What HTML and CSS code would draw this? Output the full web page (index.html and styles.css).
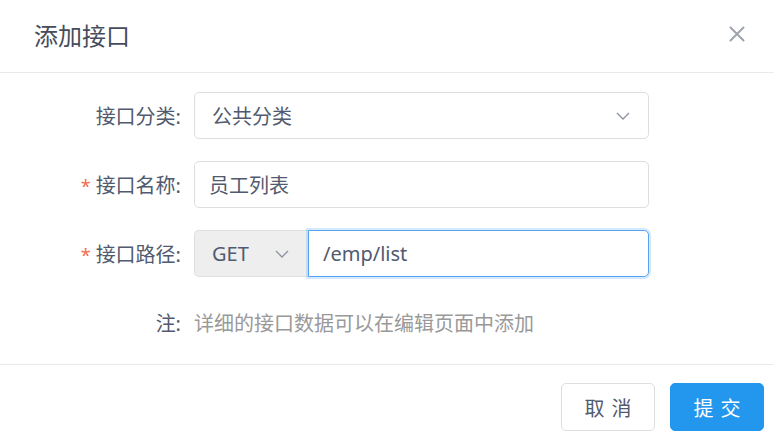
FILE: index.html
```html
<!DOCTYPE html>
<html>

<head>
    <meta charset="UTF-8">
    <title>添加接口</title>
    <link rel="stylesheet" href="styles.css">
</head>

<body>
    <div class="dialog">
        <div class="dialogHeader">
            <span class="dialogTitle">添加接口</span>
            <span class="dialogClose">
                <svg width="16" height="16" viewBox="0 0 16 16">
                    <path d="M1.5 1.5 L14.5 14.5 M14.5 1.5 L1.5 14.5" stroke="#9ea3ad" stroke-width="2" fill="none" stroke-linecap="round" />
                </svg>
            </span>
        </div>

        <div class="dialogBody">
            <div class="formItem">
                <label class="formLabel">接口分类:</label>
                <div class="formControl">
                    <div class="select">
                        <span>公共分类</span>
                        <svg class="arrow" width="14" height="8" viewBox="0 0 14 8">
                            <polyline points="1,1 7,7 13,1" fill="none" stroke="#8a91a0" stroke-width="1.3" />
                        </svg>
                    </div>
                </div>
            </div>

            <div class="formItem">
                <label class="formLabel"><i class="required">*</i>接口名称:</label>
                <div class="formControl">
                    <input class="input" type="text" value="员工列表" />
                </div>
            </div>

            <div class="formItem">
                <label class="formLabel"><i class="required">*</i>接口路径:</label>
                <div class="formControl inputGroup">
                    <div class="prepend">
                        <span>GET</span>
                        <svg class="arrow" width="14" height="8" viewBox="0 0 14 8">
                            <polyline points="1,1 7,7 13,1" fill="none" stroke="#8a91a0" stroke-width="1.3" />
                        </svg>
                    </div>
                    <input class="input focused" type="text" value="/emp/list" />
                </div>
            </div>

            <div class="formItem">
                <label class="formLabel">注:</label>
                <div class="formControl hint">详细的接口数据可以在编辑页面中添加</div>
            </div>
        </div>

        <div class="dialogFooter">
            <button class="btn">取消</button>
            <button class="btn btnPrimary">提交</button>
        </div>
    </div>
</body>

</html>
```

FILE: styles.css
```css
* {
    margin: 0;
    padding: 0;
    box-sizing: border-box;
}

/* Global styles */
body {
    font-family: "Noto Sans", "Noto Sans CJK SC", sans-serif;
    background-color: #fff;
    color: #515a6e;
}

.dialog {
    width: 774px;
}

/* Header */
.dialogHeader {
    height: 73px;
    border-bottom: 1px solid #e8eaec;
    display: flex;
    align-items: center;
    justify-content: space-between;
    padding: 0 29px 4px 34px;
}

.dialogTitle {
    font-size: 24px;
    color: #464c5b;
}

.dialogClose {
    display: flex;
    cursor: pointer;
}

/* Form */
.dialogBody {
    padding: 19px 0 18px;
}

.formItem {
    display: flex;
    align-items: center;
    height: 47px;
    margin-bottom: 22px;
    font-size: 20px;
}

.formItem:last-child {
    margin-bottom: 0;
}

.formLabel {
    width: 194px;
    padding-right: 13px;
    text-align: right;
    color: #515a6e;
}

.required {
    font-style: normal;
    color: #f56c4c;
    margin-right: 5px;
    font-size: 18px;
}

.formControl {
    width: 455px;
    height: 100%;
}

.select {
    height: 100%;
    border: 1px solid #dcdee2;
    border-radius: 5px;
    display: flex;
    align-items: center;
    justify-content: space-between;
    padding: 0 18px 0 17px;
}

.input {
    width: 100%;
    height: 100%;
    border: 1px solid #dcdee2;
    border-radius: 5px;
    padding: 0 14px;
    font-family: inherit;
    font-size: 20px;
    color: #515a6e;
    outline: none;
}

.inputGroup {
    display: flex;
}

.prepend {
    width: 114px;
    flex: none;
    background-color: #eeeeee;
    border: 1px solid #dcdee2;
    border-right: none;
    border-radius: 5px 0 0 5px;
    display: flex;
    align-items: center;
    justify-content: space-between;
    padding: 0 19px 0 17px;
}

.inputGroup .input {
    border-radius: 0 5px 5px 0;
}

.input.focused {
    border-color: #57a3f3;
    box-shadow: 0 0 0 2px rgba(45, 140, 240, 0.2);
}

.hint {
    display: flex;
    align-items: center;
    color: #999;
}

/* Footer */
.dialogFooter {
    border-top: 1px solid #e8eaec;
    display: flex;
    justify-content: flex-end;
    gap: 15px;
    padding: 18px 10px 0 0;
}

.btn {
    width: 94px;
    height: 48px;
    border: 1px solid #dcdee2;
    border-radius: 5px;
    background-color: #fff;
    color: #515a6e;
    font-family: inherit;
    font-size: 20px;
    letter-spacing: 7px;
    padding-left: 7px;
    cursor: pointer;
}

.btnPrimary {
    background-color: #2396ee;
    border-color: #2396ee;
    color: #fff;
}
```
